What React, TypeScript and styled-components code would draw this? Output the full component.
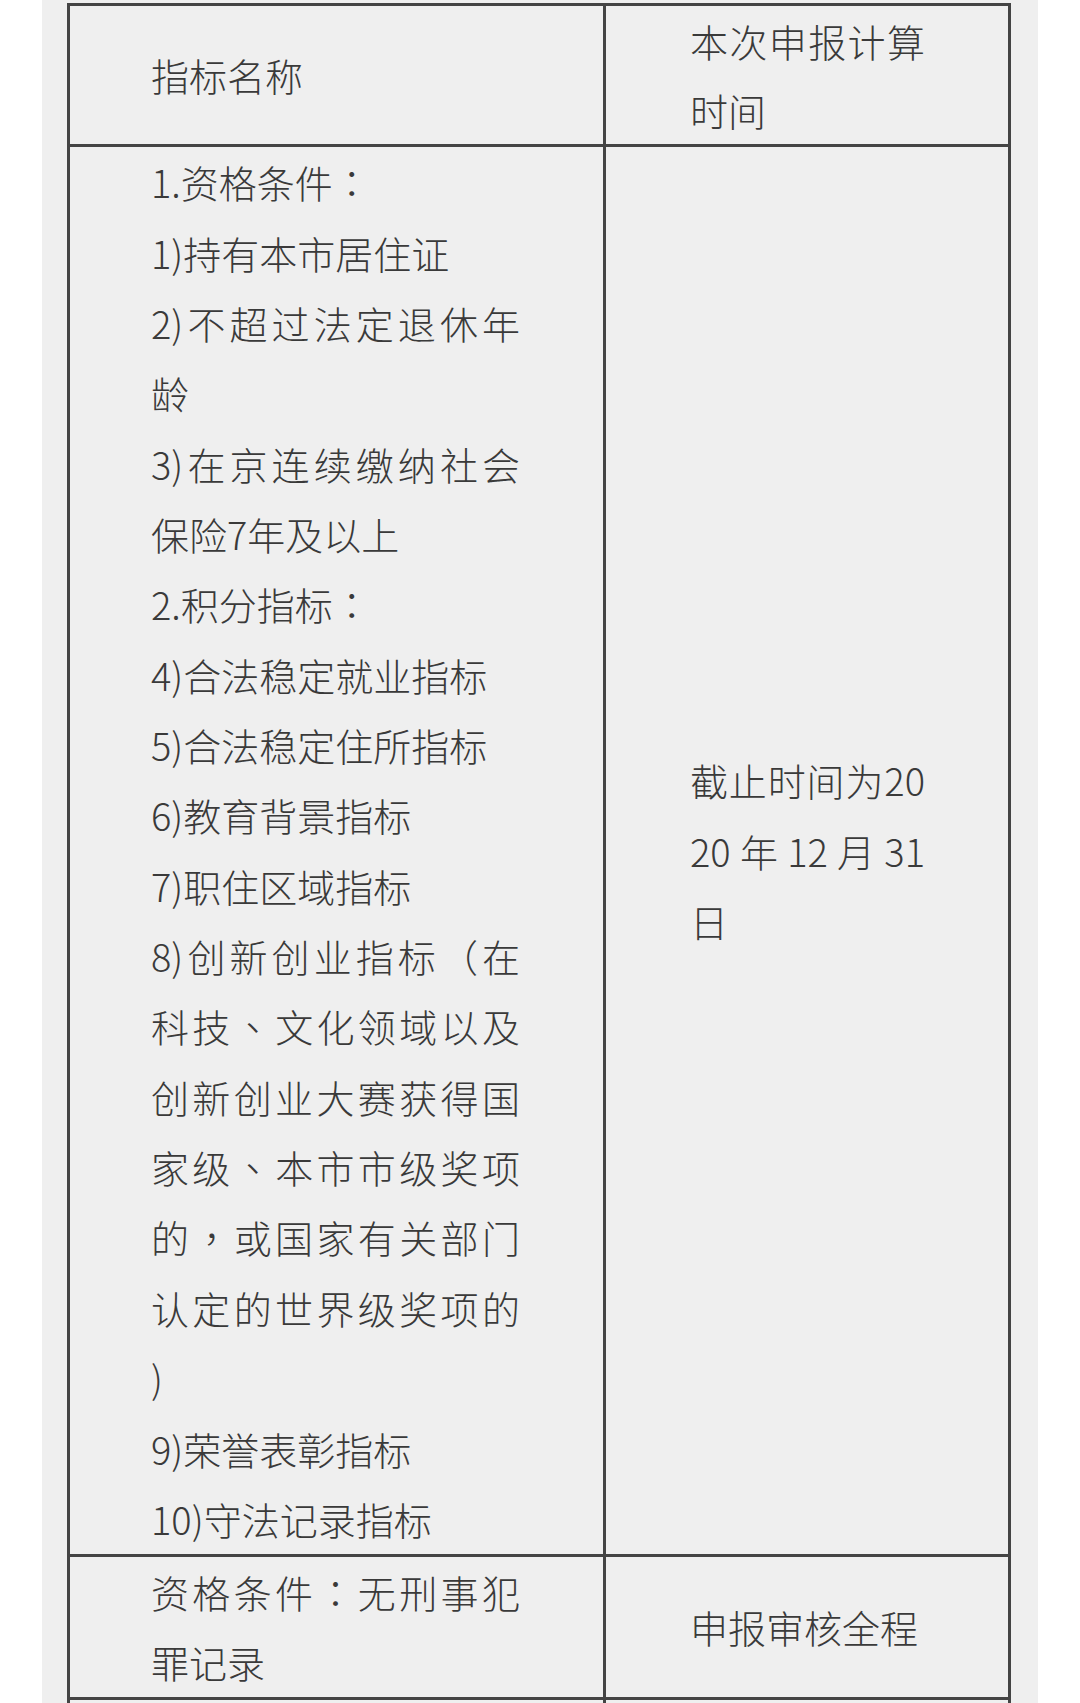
import React from "react";
import styled, { createGlobalStyle } from "styled-components";

const GlobalStyle = createGlobalStyle`
  html, body {
    margin: 0;
    padding: 0;
    background: #ffffff;
  }
  body {
    font-family: "Noto Sans CJK SC", "Noto Sans", sans-serif;
  }
`;

const Panel = styled.div`
  width: 996px;
  min-height: 1703px;
  margin-left: 42px;
  padding: 2.5px 27px 0 25px;
  box-sizing: border-box;
  background-color: #efefef;
`;

const Grid = styled.div`
  display: grid;
  grid-template-columns: 536px 405px;
  border-top: 3px solid #444444;
  border-left: 3px solid #444444;
  color: #3a3a3a;
  font-size: 38px;
  font-weight: 300;
`;

const Cell = styled.div<{ $right?: boolean; $lh?: number; $empty?: boolean }>`
  display: flex;
  flex-direction: column;
  justify-content: center;
  box-sizing: border-box;
  border-right: 3px solid #444444;
  border-bottom: 3px solid #444444;
  padding: 0 83px 0 ${({ $right }) => ($right ? "84px" : "81px")};
  line-height: ${({ $lh }) => $lh ?? 70.2}px;
  min-height: ${({ $empty }) => ($empty ? "140px" : "0")};
`;

const Line = styled.div<{ $fill?: boolean }>`
  text-align: ${({ $fill }) => ($fill ? "justify" : "left")};
  text-align-last: ${({ $fill }) => ($fill ? "justify" : "auto")};
`;

// full-width marks sit centred in their box in the source, as in the TC cut
const Punct = styled.span`
  font-family: "Noto Sans CJK TC", "Noto Sans CJK SC", sans-serif;
`;

const withPunct = (t: string) =>
  t.split(/([：，、])/).map((part, k) =>
    /^[：，、]$/.test(part) ? <Punct key={k}>{part}</Punct> : part
  );

type L = { t: string; f?: boolean };

const rows: { left: L[]; right: L[]; lh?: number }[] = [
  {
    lh: 69.4,
    left: [{ t: "指标名称" }],
    right: [{ t: "本次申报计算", f: true }, { t: "时间" }],
  },
  {
    lh: 70.35,
    left: [
      { t: "1.资格条件：" },
      { t: "1)持有本市居住证" },
      { t: "2)不超过法定退休年", f: true },
      { t: "龄" },
      { t: "3)在京连续缴纳社会", f: true },
      { t: "保险7年及以上" },
      { t: "2.积分指标：" },
      { t: "4)合法稳定就业指标" },
      { t: "5)合法稳定住所指标" },
      { t: "6)教育背景指标" },
      { t: "7)职住区域指标" },
      { t: "8)创新创业指标（在", f: true },
      { t: "科技、文化领域以及", f: true },
      { t: "创新创业大赛获得国", f: true },
      { t: "家级、本市市级奖项", f: true },
      { t: "的，或国家有关部门", f: true },
      { t: "认定的世界级奖项的", f: true },
      { t: ")" },
      { t: "9)荣誉表彰指标" },
      { t: "10)守法记录指标" },
    ],
    right: [
      { t: "截止时间为20", f: true },
      { t: "20年12月31", f: true },
      { t: "日" },
    ],
  },
  {
    lh: 70,
    left: [{ t: "资格条件：无刑事犯", f: true }, { t: "罪记录" }],
    right: [{ t: "申报审核全程" }],
  },
];

function App() {
  return (
    <>
      <GlobalStyle />
      <Panel>
        <Grid>
          {rows.map((row, i) => (
            <React.Fragment key={i}>
              <Cell $lh={row.lh}>
                {row.left.map((l, j) => (
                  <Line key={j} $fill={l.f}>
                    {withPunct(l.t)}
                  </Line>
                ))}
              </Cell>
              <Cell $lh={row.lh} $right>
                {row.right.map((l, j) => (
                  <Line key={j} $fill={l.f}>
                    {withPunct(l.t)}
                  </Line>
                ))}
              </Cell>
            </React.Fragment>
          ))}
          <Cell $empty />
          <Cell $empty $right />
        </Grid>
      </Panel>
    </>
  );
}

export default App;
